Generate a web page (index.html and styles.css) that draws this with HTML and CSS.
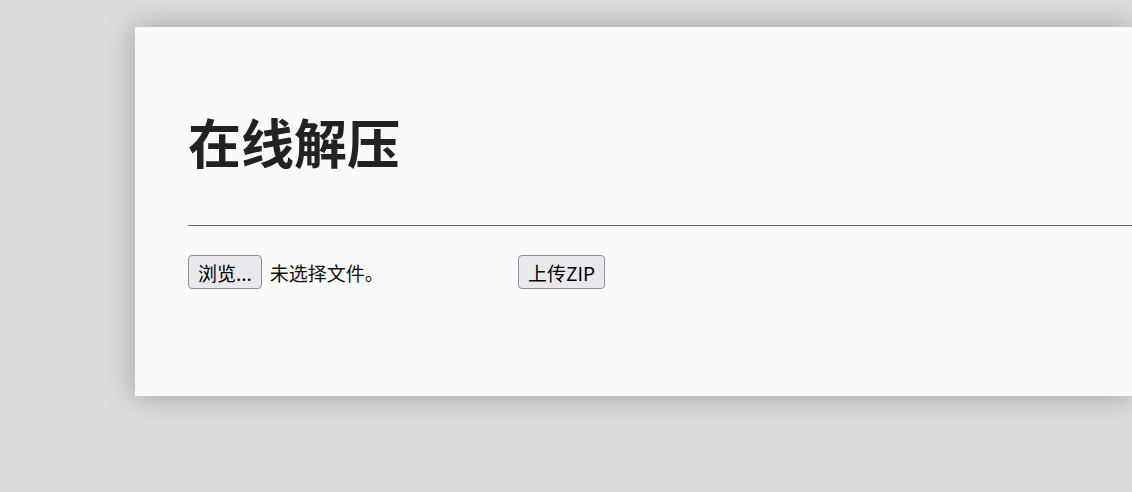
FILE: index.html
```html
<!DOCTYPE html>
<html lang="zh">
<head>
<meta charset="utf-8">
<title>在线解压</title>
<link rel="stylesheet" href="styles.css">
</head>
<body>
<main class="card">
  <h1 class="title">在线解压</h1>
  <hr class="rule">
  <form class="upload">
    <span class="file">
      <button type="button" class="btn">浏览...</button>
      <span class="file-label">未选择文件。</span>
    </span>
    <button type="button" class="btn">上传ZIP</button>
  </form>
</main>
</body>
</html>
```
FILE: styles.css
```css
html, body {
  margin: 0;
  padding: 0;
}
body {
  background: #dcdcdc;
  overflow: hidden;
  height: 492px;
  font-family: "Noto Sans CJK SC", "Noto Sans", sans-serif;
  color: #222;
}
.card {
  margin: 27px 0 0 135px;
  height: 369px;
  box-sizing: border-box;
  padding: 0 0 0 53px;
  background: #fafafa;
  box-shadow: 0 0 28px rgba(0, 0, 0, 0.28);
  display: flex;
  flex-direction: column;
}
.title {
  margin: 88px 0 0;
  font-size: 53px;
  line-height: 1;
  font-weight: 700;
  color: #222;
}
.rule {
  margin: 57px 0 0;
  border: 0;
  border-top: 1px solid #666;
  height: 0;
}
.upload {
  margin-top: 29px;
  display: flex;
  align-items: center;
}
.file {
  width: 330px;
  display: flex;
  align-items: center;
  gap: 8px;
}
.file-label {
  font-size: 19px;
  color: #111;
}
.btn {
  font-family: "Noto Sans CJK SC", "Noto Sans", sans-serif;
  font-size: 19px;
  height: 34px;
  padding: 0 9px;
  border: 1px solid #8f8f9d;
  border-radius: 4px;
  background: #e9e9ed;
  color: #000;
  line-height: 1;
}
```
